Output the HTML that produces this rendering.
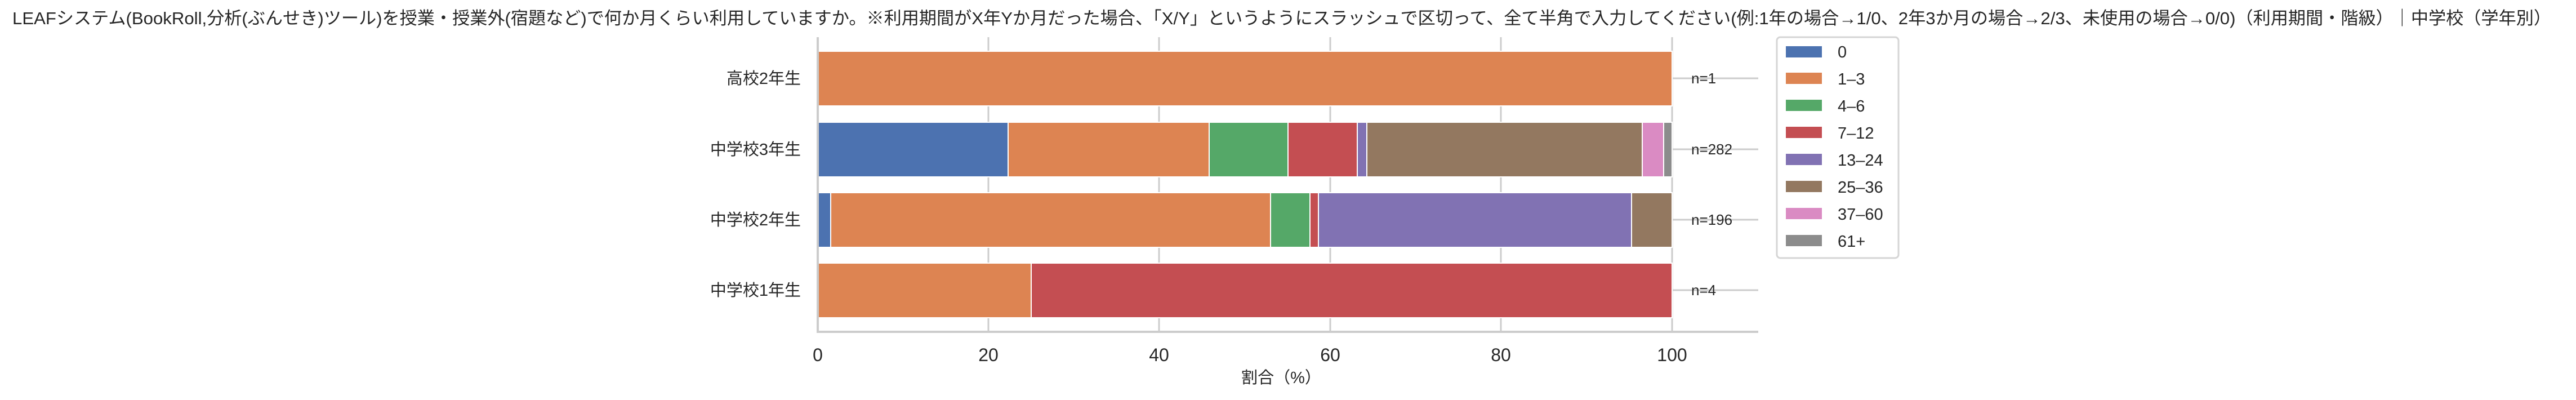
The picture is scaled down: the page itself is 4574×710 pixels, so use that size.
<!DOCTYPE html>
<html><head><meta charset="utf-8"><style>html,body{margin:0;padding:0;background:#fff;}svg{display:block}</style></head>
<body>
<svg width="4574" height="710" xmlns="http://www.w3.org/2000/svg" font-family="'Liberation Sans','Noto Sans CJK JP',sans-serif" fill="#262626">
<text x="22" y="43" font-size="31" textLength="4508" lengthAdjust="spacingAndGlyphs">LEAFシステム(BookRoll,分析(ぶんせき)ツール)を授業・授業外(宿題など)で何か月くらい利用していますか。※利用期間がX年Yか月だった場合、「X/Y」というようにスラッシュで区切って、全て半角で入力してください(例:1年の場合→1/0、2年3か月の場合→2/3、未使用の場合→0/0)（利用期間・階級）｜中学校（学年別）</text>
<g stroke="#cccccc" stroke-width="3">
<line x1="1755" y1="66" x2="1755" y2="589"/><line x1="2058" y1="66" x2="2058" y2="589"/><line x1="2362" y1="66" x2="2362" y2="589"/><line x1="2665" y1="66" x2="2665" y2="589"/><line x1="2969" y1="66" x2="2969" y2="589"/>
<line x1="2969" y1="139" x2="3122" y2="139"/><line x1="2969" y1="265" x2="3122" y2="265"/><line x1="2969" y1="390" x2="3122" y2="390"/><line x1="2969" y1="515" x2="3122" y2="515"/>
</g>
<g stroke="#fff" stroke-width="2">
<rect x="1452" y="91" width="1517" height="97" fill="#dd8452"/>
<rect x="1452" y="217" width="338" height="97" fill="#4c72b0"/>
<rect x="1790" y="217" width="357" height="97" fill="#dd8452"/>
<rect x="2147" y="217" width="140" height="97" fill="#55a868"/>
<rect x="2287" y="217" width="123" height="97" fill="#c44e52"/>
<rect x="2410" y="217" width="17" height="97" fill="#8172b3"/>
<rect x="2427" y="217" width="489" height="97" fill="#937860"/>
<rect x="2916" y="217" width="38" height="97" fill="#da8bc3"/>
<rect x="2954" y="217" width="15" height="97" fill="#8c8c8c"/>
<rect x="1452" y="342" width="23" height="97" fill="#4c72b0"/>
<rect x="1475" y="342" width="781" height="97" fill="#dd8452"/>
<rect x="2256" y="342" width="70" height="97" fill="#55a868"/>
<rect x="2326" y="342" width="15" height="97" fill="#c44e52"/>
<rect x="2341" y="342" width="556" height="97" fill="#8172b3"/>
<rect x="2897" y="342" width="72" height="97" fill="#937860"/>
<rect x="1452" y="467" width="379" height="97" fill="#dd8452"/>
<rect x="1831" y="467" width="1138" height="97" fill="#c44e52"/>
</g>
<g stroke="#cccccc" stroke-width="4"><line x1="1452" y1="66" x2="1452" y2="591"/><line x1="1450" y1="589" x2="3122" y2="589"/></g>
<g font-size="26"><text x="3003" y="148">n=1</text><text x="3003" y="274">n=282</text><text x="3003" y="399">n=196</text><text x="3003" y="524">n=4</text></g>
<g font-size="29" text-anchor="end"><text x="1422" y="149">高校2年生</text><text x="1422" y="275">中学校3年生</text><text x="1422" y="400">中学校2年生</text><text x="1422" y="525">中学校1年生</text></g>
<g font-size="32" text-anchor="middle"><text x="1452" y="641">0</text><text x="1755" y="641">20</text><text x="2058" y="641">40</text><text x="2362" y="641">60</text><text x="2665" y="641">80</text><text x="2969" y="641">100</text>
<text x="2275" y="680" font-size="29">割合（%）</text></g>
<rect x="3155" y="66" width="216" height="392" rx="6" fill="#fff" stroke="#d5d5d5" stroke-width="3"/>
<g font-size="29">
<rect x="3171" y="82" width="64" height="20" fill="#4c72b0"/><text x="3263" y="102">0</text>
<rect x="3171" y="129" width="64" height="20" fill="#dd8452"/><text x="3263" y="150">1–3</text>
<rect x="3171" y="177" width="64" height="20" fill="#55a868"/><text x="3263" y="198">4–6</text>
<rect x="3171" y="225" width="64" height="20" fill="#c44e52"/><text x="3263" y="246">7–12</text>
<rect x="3171" y="273" width="64" height="20" fill="#8172b3"/><text x="3263" y="294">13–24</text>
<rect x="3171" y="321" width="64" height="20" fill="#937860"/><text x="3263" y="342">25–36</text>
<rect x="3171" y="369" width="64" height="20" fill="#da8bc3"/><text x="3263" y="390">37–60</text>
<rect x="3171" y="417" width="64" height="20" fill="#8c8c8c"/><text x="3263" y="438">61+</text>
</g>
</svg>
</body></html>
